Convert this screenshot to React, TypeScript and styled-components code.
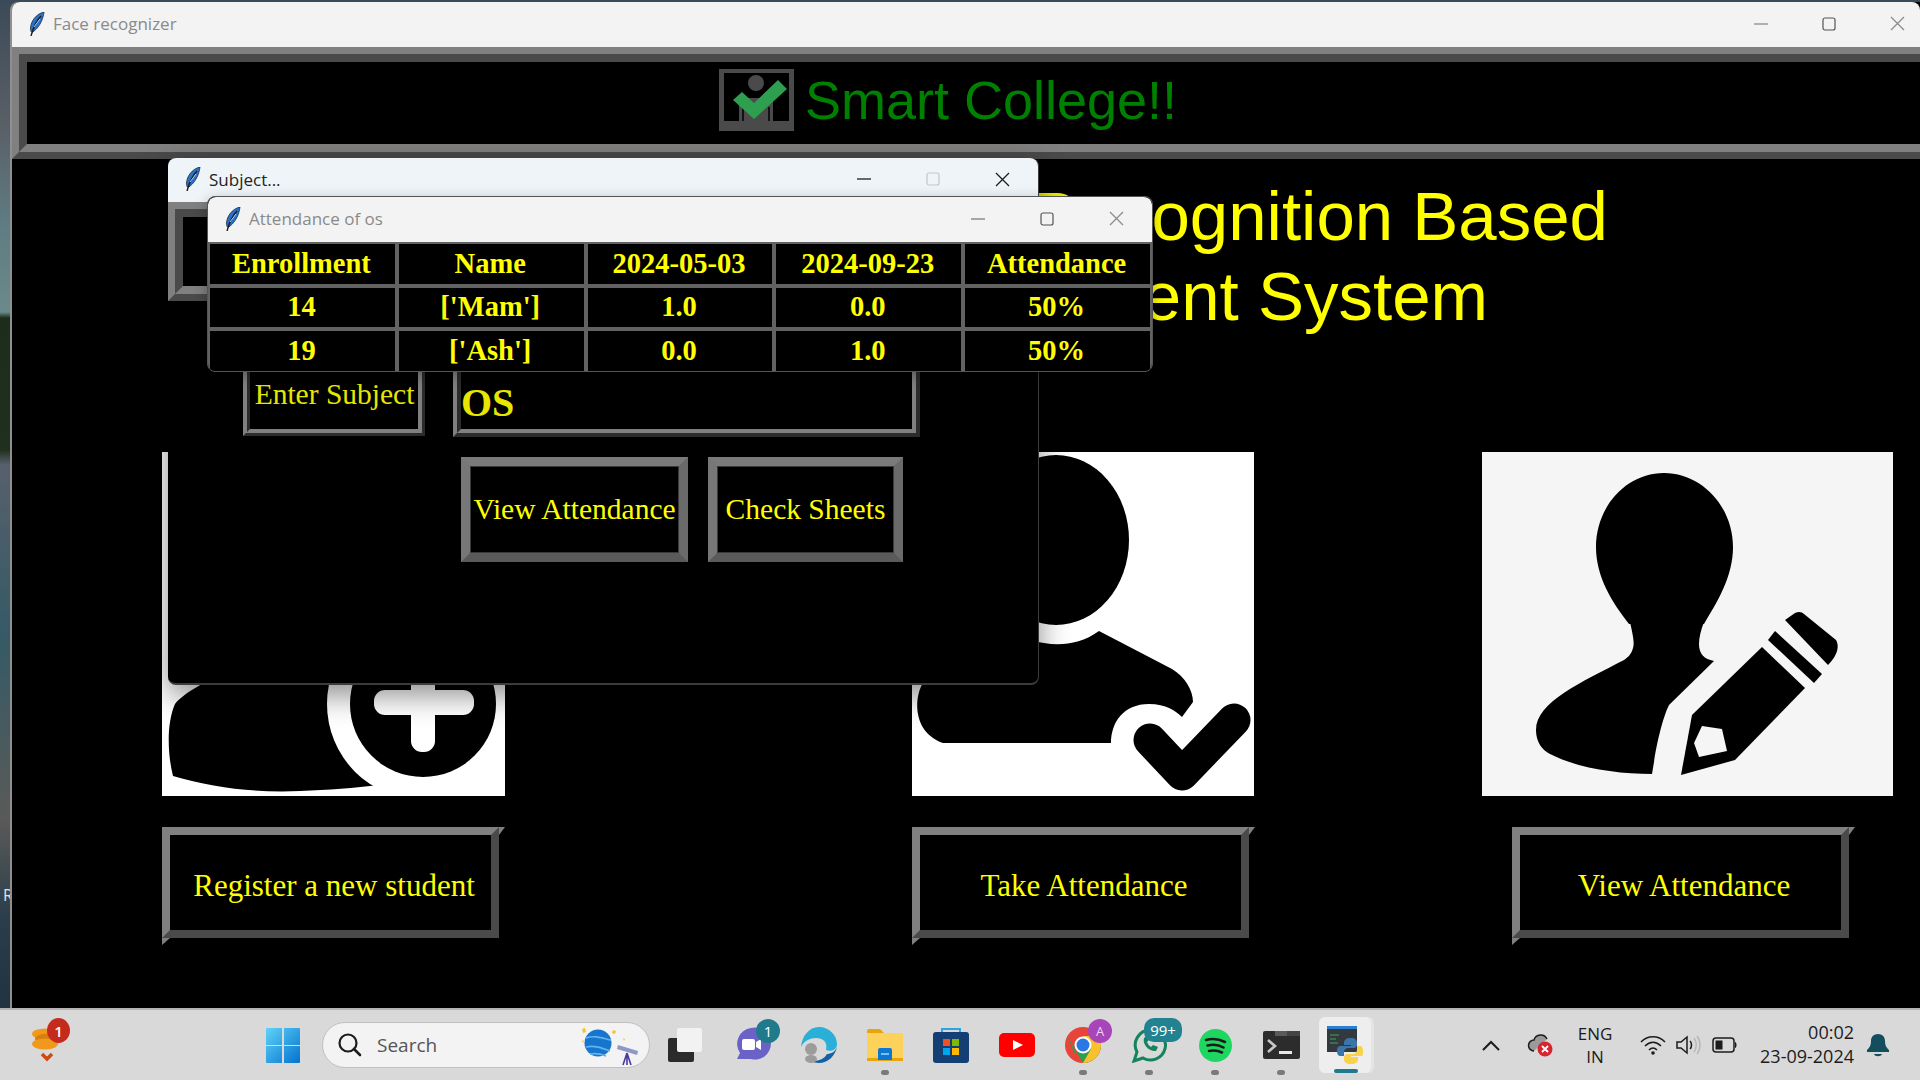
import React from 'react';
import styled, { createGlobalStyle } from 'styled-components';

const GlobalStyle = createGlobalStyle`
  html, body {
    margin: 0;
    padding: 0;
    width: 1920px;
    height: 1080px;
    overflow: hidden;
    background: #000;
    font-family: "Liberation Serif", serif;
  }
`;

const UI_FONT = `"Open Sans", "Noto Sans", sans-serif`;

function Feather() {
  return (
    <svg width="16" height="24" viewBox="0 0 16 24">
      <path d="M15 0C7 2 2 9 1.500 16c-.2 2 .3 3.500 1.500 4.500C9 17 14 9 15 0z" fill="#2a72c8" stroke="#1b2a3c" strokeWidth=".8" />
      <path d="M12 4C8 8 5 13 2 24" stroke="#141c26" strokeWidth="1.400" fill="none" />
      <path d="M5 15c2-3 4-5 6-8" stroke="#a9d0f5" strokeWidth="1" fill="none" />
    </svg>
  );
}

function WindowControls({ dim, gaps, inset, disabledMax }: { dim?: boolean; gaps: number; inset: number; disabledMax?: boolean }) {
  const stroke = dim ? '#8c8c8c' : '#1c1c1c';
  return (
    <Controls $gap={gaps} $inset={inset}>
      <svg width="14" height="14" viewBox="0 0 14 14">
        <path d="M0 7h14" stroke={stroke} strokeWidth="1.3" />
      </svg>
      <svg width="14" height="14" viewBox="0 0 14 14">
        <rect x="1" y="1" width="12" height="12" rx="2" fill="none" stroke={disabledMax ? '#c6c6c6' : dim ? '#555' : stroke} strokeWidth="1.2" />
      </svg>
      <svg width="15" height="15" viewBox="0 0 15 15">
        <path d="M1 1l13 13M14 1L1 14" stroke={stroke} strokeWidth="1.3" />
      </svg>
    </Controls>
  );
}

function Logo() {
  return (
    <svg width="75" height="62" viewBox="0 0 75 62">
      <rect width="75" height="62" fill="#4a4a4a" />
      <rect x="5" y="4" width="65" height="48" fill="#000" />
      <circle cx="37" cy="14" r="8" fill="#4a4a4a" />
      <path d="M20 29h34v23H20z" fill="#4a4a4a" />
      <path d="M24 38v14M50 38v14" stroke="#000" strokeWidth="1.5" />
      <path d="M14 31l9-8 12 11 24-23 9 9-33 30z" fill="#2e9e4f" />
    </svg>
  );
}

function AddUserArt() {
  return (
    <Art viewBox="0 0 343 344">
      <rect width="343" height="344" fill="#fff" />
      <ellipse cx="150" cy="90" rx="72" ry="84" fill="#000" />
      <path d="M150 190C110 200 30 230 13 252 5 270 5 300 11 324c40 12 85 17 127 15 28-1 55-3 79-6L240 200z" fill="#000" />
      <circle cx="261" cy="252" r="96" fill="#fff" />
      <circle cx="261" cy="252" r="73" fill="#000" />
      <rect x="212" y="238" width="100" height="25" rx="11" fill="#fff" />
      <rect x="249" y="200" width="24" height="100" rx="11" fill="#fff" />
    </Art>
  );
}

function TakeAttendanceArt() {
  return (
    <Art viewBox="0 0 342 344">
      <rect width="342" height="344" fill="#fff" />
      <ellipse cx="144" cy="88" rx="73" ry="85" fill="#000" />
      <path d="M187 179c-18 13-38 15-55 12-20-3-35-6-45-8C60 200 20 205 11 231 2 245 0 280 31 291h168c0-20 12-39 38-39 17 0 27 7 33 13l11-15c0-12-8-25-21-33z" fill="#000" />
      <path d="M238 288l32 34 52-54" stroke="#000" strokeWidth="33" strokeLinecap="round" strokeLinejoin="round" fill="none" />
    </Art>
  );
}

function ViewAttendanceArt() {
  return (
    <Art viewBox="0 0 411 344">
      <rect width="411" height="344" fill="#f5f5f5" />
      <path d="M182 21C220 21 251 55 251 95 251 125 235 150 222 172L147 172C130 150 114 125 114 95 114 55 144 21 182 21z" fill="#000" />
      <path d="M147 165C150 180 153 190 151 196 149 203 146 205 142 208 100 230 54 250 54 278 54 290 60 298 68 302 95 316 135 322 170 322L172 310C175 290 181 265 187 253L232 209C222 207 217 202 217 192 217 185 219 178 222 170z" fill="#000" />
      <path d="M199 323l11-60 70-68 43 41-70 72z" fill="#000" />
      <path d="M220 274l20 3 5 22-28 6-5-14z" fill="#f5f5f5" />
      <path d="M293 179l47 43-8 9-46-43z" fill="#000" />
      <path d="M303 168l10-7c4-2 7-1 9 1l32 26c3 5 3 14-8 25z" fill="#000" />
    </Art>
  );
}

function Coins() {
  return (
    <svg width="32" height="36" viewBox="0 0 32 36">
      <ellipse cx="14" cy="7" rx="13" ry="5.500" fill="#f0991d" />
      <ellipse cx="17" cy="12" rx="13" ry="5.500" fill="#d97f10" />
      <ellipse cx="14" cy="17" rx="13" ry="5.500" fill="#f0991d" />
      <path d="M11 27l5 5 5-5" stroke="#d2490f" strokeWidth="3.500" fill="none" />
    </svg>
  );
}

function WinLogo() {
  return (
    <svg width="34" height="35" viewBox="0 0 34 35">
      <defs>
        <linearGradient id="w" x1="0" y1="0" x2="1" y2="1">
          <stop offset="0" stopColor="#5fd3f8" />
          <stop offset="1" stopColor="#0572cf" />
        </linearGradient>
      </defs>
      <path d="M0 1a1 1 0 011-1h15v17H0zM18 0h15a1 1 0 011 1v16H18zM0 18h16v17H1a1 1 0 01-1-1zM18 18h16v16a1 1 0 01-1 1H18z" fill="url(#w)" />
    </svg>
  );
}

function SearchArt() {
  return (
    <svg width="62" height="44" viewBox="0 0 62 44">
      <circle cx="18" cy="20" r="13.500" fill="#1875cd" />
      <path d="M6 15c8-3 16 0 25 2M6 24c8-2 16 1 24 4M10 31c6-1 11 0 16 2" stroke="#62b4ee" strokeWidth="1.600" fill="none" />
      <path d="M2 6l3-1 1 4-3 1zM33 7l3 1-1 3-3-1zM2 17l2 1-1 2zM43 15l2 1-1 2z" fill="#f2c52f" />
      <path d="M38 22l20 6-1 4-20-6z" fill="#8f96c8" />
      <path d="M47 30l-4 12M47 30l4 12M47 30v12" stroke="#4a3b9d" strokeWidth="1.600" />
    </svg>
  );
}

function TaskView() {
  return (
    <TaskViewBox>
      <svg width="36" height="34" viewBox="0 0 36 34">
        <rect x="1" y="10" width="26" height="24" rx="2" fill="#2b2b2b" />
        <rect x="10" y="0" width="25" height="24" rx="2" fill="#f2f2f2" />
      </svg>
    </TaskViewBox>
  );
}

const appIcons: Record<string, React.ReactNode> = {
  chat: (
    <svg width="36" height="36" viewBox="2 0 36 36">
      <path d="M18 1a16 16 0 110 31H4l3-6A16 16 0 0118 1z" fill="#6b62c8" />
      <rect x="9" y="12" width="13" height="11" rx="2" fill="#fff" />
      <path d="M23 15l5-3v11l-5-3z" fill="#fff" />
    </svg>
  ),
  edge: (
    <svg width="36" height="36" viewBox="0 0 36 36">
      <path d="M18 0c10 0 18 8 18 17 0 6-6 8-11 6 2-8-3-12-10-12C9 11 3 14 0 20 1 9 8 0 18 0z" fill="#2ab0d8" />
      <path d="M36 20c-2 9-9 16-18 16-4 0-7-1-9-3 6 2 14 0 17-6 4 0 8-2 10-7z" fill="#1160a8" />
      <circle cx="10" cy="22" r="6" fill="#9c9c9c" />
      <ellipse cx="10" cy="32" rx="6" ry="4" fill="#9c9c9c" />
    </svg>
  ),
  files: (
    <svg width="38" height="32" viewBox="0 0 38 32">
      <path d="M1 2a2 2 0 012-2h11l4 4H1z" fill="#e8a60c" />
      <rect x="1" y="4" width="36" height="28" rx="1" fill="#fdd25b" />
      <rect x="1" y="29" width="36" height="3" fill="#e8a60c" />
      <path d="M12 21a2 2 0 012-2h10a2 2 0 012 2v10H12z" fill="#0a78d4" />
      <rect x="15" y="24" width="8" height="2" fill="#7cc0f2" />
    </svg>
  ),
  store: (
    <svg width="36" height="36" viewBox="0 0 36 36">
      <path d="M9 7V2h18v5" stroke="#2ca4e0" strokeWidth="2" fill="none" />
      <rect y="5" width="36" height="31" rx="3" fill="#143f74" />
      <rect x="10" y="12" width="7" height="7" fill="#f25022" />
      <rect x="19" y="12" width="7" height="7" fill="#7fba00" />
      <rect x="10" y="21" width="7" height="7" fill="#00a4ef" />
      <rect x="19" y="21" width="7" height="7" fill="#ffb900" />
    </svg>
  ),
  youtube: (
    <svg width="36" height="24" viewBox="0 0 36 24">
      <rect width="36" height="24" rx="5" fill="#f00" />
      <path d="M14 7l10 5-10 5z" fill="#fff" />
    </svg>
  ),
  chrome: (
    <svg width="36" height="36" viewBox="0 0 36 36">
      <circle cx="18" cy="18" r="18" fill="#e8443a" />
      <path d="M2.400 9L18 36c10 0 18-8 18-18H18L10 27z" fill="#2f9e4f" />
      <path d="M18 36c10 0 18-8 18-18 0-3-1-6-2-9H18l8 13z" fill="#fbc02d" />
      <circle cx="18" cy="18" r="8.500" fill="#fff" />
      <circle cx="18" cy="18" r="6.500" fill="#2a78e4" />
    </svg>
  ),
  whatsapp: (
    <svg width="36" height="36" viewBox="0 0 36 36">
      <path d="M19 3a15 15 0 11-7 28l-9 3 3-9A15 15 0 0119 3z" fill="none" stroke="#15835c" strokeWidth="3" />
      <path d="M13 11c-2 6 5 14 12 13l2-4-5-2-2 2c-2-1-3-3-4-5l2-2-2-4z" fill="#15835c" />
    </svg>
  ),
  spotify: (
    <svg width="33" height="33" viewBox="0 0 33 33">
      <circle cx="16.500" cy="16.500" r="16.500" fill="#1ed760" />
      <path d="M7 11c7-2 13-1 19 2M8.500 16.500c6-1.500 11-1 16 2M10 22c5-1 9-.5 13 1.500" stroke="#1b1b1b" strokeWidth="2.600" strokeLinecap="round" fill="none" />
    </svg>
  ),
  terminal: (
    <svg width="37" height="28" viewBox="0 0 37 28">
      <rect width="37" height="28" rx="2" fill="#2c2c2c" />
      <rect x="12" width="12" height="5" fill="#5a5a5a" />
      <rect x="24" width="13" height="5" fill="#444" />
      <path d="M5 9l7 6-7 6" stroke="#c8c8c8" strokeWidth="2.600" fill="none" />
      <rect x="16" y="20" width="13" height="3" fill="#e8e8e8" />
    </svg>
  ),
  python: (
    <svg width="36" height="38" viewBox="0 0 36 38">
      <rect width="30" height="26" fill="#33393f" />
      <rect width="30" height="3" fill="#2f7fd0" />
      <path d="M3 9h9M3 13h6M3 17h8" stroke="#3fa858" strokeWidth="1.200" />
      <path d="M24 12c-5 0-7 2-7 5v2h7v1H14c-3 0-4 2-4 5s1 5 4 5h3v-4c0-2 2-4 4-4h6c2 0 3-2 3-3v-2c0-3-2-5-6-5z" fill="#3a76a8" />
      <path d="M24 38c5 0 7-2 7-5v-2h-7v-1h10c2 0 2-2 2-5s-1-5-3-5h-3v4c0 2-2 4-4 4h-6c-2 0-3 2-3 3v2c0 3 2 5 7 5z" fill="#f7d24a" />
    </svg>
  ),
};

const apps = [
  { key: 'chat', badge: '1' },
  { key: 'edge' },
  { key: 'files', running: true },
  { key: 'store' },
  { key: 'youtube' },
  { key: 'chrome', avatar: 'A', running: true },
  { key: 'whatsapp', wide: '99+', running: true },
  { key: 'spotify', running: true },
  { key: 'terminal', running: true },
];

const tableRows = [
  ['Enrollment', 'Name', '2024-05-03', '2024-09-23', 'Attendance'],
  ['14', "['Mam']", '1.0', '0.0', '50%'],
  ['19', "['Ash']", '0.0', '1.0', '50%'],
];

const cards = [
  { label: 'Register a new student', art: <AddUserArt />, width: 343, offset: 150, shift: 0 },
  { label: 'Take Attendance', art: <TakeAttendanceArt />, width: 342, offset: 407, shift: 0 },
  { label: 'View Attendance', art: <ViewAttendanceArt />, width: 411, offset: 228, shift: 30 },
];

export default function App() {
  return (
    <>
      <GlobalStyle />
      <Page>
        <Desktop>
          <DesktopLabel>R</DesktopLabel>
          <MainWindow>
            <TitleBar $height={45}>
              <TitleIcon><Feather /></TitleIcon>
              <TitleText $dim>Face recognizer</TitleText>
              <WindowControls dim gaps={54} inset={15} />
            </TitleBar>
            <MainRidge>
              <BrandBar>
                <Brand>
                  <Logo />
                  <BrandName>Smart College!!</BrandName>
                </Brand>
              </BrandBar>
            </MainRidge>
            <Heading>
              <HeadingLine>Face Recognition Based</HeadingLine>
              <HeadingLine $inset={120}>Attendance Management System</HeadingLine>
            </Heading>
            <CardRow>
              {cards.map((card) => (
                <Card key={card.label} $width={card.width} $offset={card.offset}>
                  <ArtBox>{card.art}</ArtBox>
                  <BevelButton $shift={card.shift}>{card.label}</BevelButton>
                </Card>
              ))}
            </CardRow>
          </MainWindow>

          <SubjectWindow>
            <TitleBar $height={44} $tint="#eef4f7">
              <TitleIcon><Feather /></TitleIcon>
              <TitleText>Subject...</TitleText>
              <WindowControls gaps={55} inset={28} disabledMax />
            </TitleBar>
            <Ridge>
              <SubjectBanner />
            </Ridge>
            <FormRow>
              <SubjectLabel>Enter Subject</SubjectLabel>
              <SubjectInput>OS</SubjectInput>
            </FormRow>
            <ActionRow>
              <ActionButton $width={227}>View Attendance</ActionButton>
              <ActionButton $width={195}>Check Sheets</ActionButton>
            </ActionRow>
          </SubjectWindow>

          <AttendanceWindow>
            <TitleBar $height={45}>
              <TitleIcon><Feather /></TitleIcon>
              <TitleText $dim>Attendance of os</TitleText>
              <WindowControls dim gaps={55} inset={28} />
            </TitleBar>
            <SheetGrid>
              {tableRows.flat().map((value, index) => (
                <SheetCell key={index}>{value}</SheetCell>
              ))}
            </SheetGrid>
          </AttendanceWindow>
        </Desktop>

        <Taskbar>
          <CoinWidget>
            <Coins />
            <CountBadge>1</CountBadge>
          </CoinWidget>
          <StartSlot><WinLogo /></StartSlot>
          <SearchPill>
            <svg width="26" height="26" viewBox="0 0 26 26">
              <circle cx="11" cy="11" r="8.500" fill="none" stroke="#1c1c1c" strokeWidth="2.200" />
              <path d="M17 17l6 6" stroke="#1c1c1c" strokeWidth="2.600" strokeLinecap="round" />
            </svg>
            <SearchText>Search</SearchText>
            <SearchArt />
          </SearchPill>
          <TaskView />
          {apps.map((app) => (
            <AppSlot key={app.key}>
              {appIcons[app.key]}
              {app.badge && <TealBadge>{app.badge}</TealBadge>}
              {app.avatar && <AvatarBadge>{app.avatar}</AvatarBadge>}
              {app.wide && <WideBadge>{app.wide}</WideBadge>}
              {app.running && <RunDot />}
            </AppSlot>
          ))}
          <ActiveSlot>
            {appIcons.python}
            <ActiveBar />
          </ActiveSlot>
          <Tray>
            <svg width="20" height="12" viewBox="0 0 20 12">
              <path d="M2 11l8-8 8 8" stroke="#1c1c1c" strokeWidth="2" fill="none" />
            </svg>
            <CloudBox>
              <svg width="26" height="24" viewBox="0 0 26 24">
                <path d="M7 18a5.500 5.500 0 010-11 7 7 0 0113-1" fill="#9a9a9a" stroke="#1c1c1c" strokeWidth="1.500" />
                <circle cx="18" cy="16" r="7.500" fill="#d9232e" />
                <path d="M15 13l6 6M21 13l-6 6" stroke="#fff" strokeWidth="1.800" />
              </svg>
            </CloudBox>
            <LangBlock>
              <span>ENG</span>
              <span>IN</span>
            </LangBlock>
            <svg width="26" height="20" viewBox="0 0 26 20">
              <path d="M1 7c7-7 17-7 24 0M5 11c5-5 11-5 16 0M9 15c2.500-2.500 5.500-2.500 8 0" stroke="#1c1c1c" strokeWidth="1.600" fill="none" />
              <circle cx="13" cy="18" r="1.800" fill="#1c1c1c" />
            </svg>
            <svg width="26" height="20" viewBox="0 0 26 20">
              <path d="M1 7h4l6-5v16l-6-5H1z" fill="none" stroke="#1c1c1c" strokeWidth="1.500" />
              <path d="M14 6c2 2 2 6 0 8" stroke="#1c1c1c" strokeWidth="1.500" fill="none" />
              <path d="M18 3c3 4 3 10 0 14M21 1c4 5 4 13 0 18" stroke="#b5b5b5" strokeWidth="1.300" fill="none" />
            </svg>
            <svg width="26" height="16" viewBox="0 0 26 16">
              <rect x="1" y="1" width="21" height="14" rx="3" fill="none" stroke="#1c1c1c" strokeWidth="1.500" />
              <rect x="3.500" y="3.500" width="7" height="9" fill="#1c1c1c" />
              <path d="M23 5c2 0 2 6 0 6z" fill="#1c1c1c" />
            </svg>
            <ClockBlock>
              <span>00:02</span>
              <span>23-09-2024</span>
            </ClockBlock>
            <svg width="22" height="24" viewBox="0 0 22 24">
              <path d="M11 1c-4.500 0-7 3-7 7 0 5-2 7-4 9v2h22v-2c-2-2-4-4-4-9 0-4-2.500-7-7-7z" fill="#134e5e" />
              <path d="M7 21h8c-1 3-7 3-8 0z" fill="#134e5e" />
            </svg>
          </Tray>
        </Taskbar>
      </Page>
    </>
  );
}

const Page = styled.div`
  display: flex;
  flex-direction: column;
  width: 1920px;
  height: 1080px;
  overflow: hidden;
`;

const Desktop = styled.div`
  position: relative;
  flex: 1;
  background: linear-gradient(180deg, #3b4a58 0, #5a5f66 125px, #5f7c82 225px, #6a8a8a 312px, #1c2d1c 318px, #20301f 450px, #56606c 465px, #355a66 635px, #5a5a58 820px, #2a3d4a 920px, #1f3340 100%);
`;

const DesktopLabel = styled.span`
  position: absolute;
  left: 3px;
  top: 884px;
  color: #d8e4f0;
  font: 16px ${UI_FONT};
`;

const MainWindow = styled.div`
  position: absolute;
  left: 12px;
  top: 2px;
  right: 0;
  bottom: 0;
  background: #000;
  border-radius: 8px 0 0 0;
  box-shadow: -2px 0 0 #8f8f8f;
`;

const TitleBar = styled.div<{ $height: number; $tint?: string }>`
  display: flex;
  align-items: center;
  box-sizing: border-box;
  height: ${(p) => p.$height}px;
  padding: 0 0 2px 17px;
  background: ${(p) => p.$tint ?? '#f3f3f3'};
  border-radius: 8px 8px 0 0;
`;

const TitleIcon = styled.span`
  display: flex;
  width: 24px;
`;

const TitleText = styled.span<{ $dim?: boolean }>`
  flex: 1;
  font: 17px ${UI_FONT};
  color: ${(p) => (p.$dim ? '#8a8a8a' : '#222')};
`;

const Controls = styled.div<{ $gap: number; $inset: number }>`
  display: flex;
  align-items: center;
  gap: ${(p) => p.$gap}px;
  padding-right: ${(p) => p.$inset}px;
`;

const Ridge = styled.div`
  border: 7px solid;
  border-color: #808080 #4a4a4a #4a4a4a #808080;
`;

const MainRidge = styled(Ridge)`
  margin-right: -16px;
  overflow: hidden;
`;

const BrandBar = styled.div`
  display: flex;
  justify-content: center;
  height: 82px;
  padding-right: 52px;
  border: 8px solid;
  border-color: #4a4a4a #808080 #808080 #4a4a4a;
  background: #000;
`;

const SubjectBanner = styled(BrandBar)`
  height: 69px;
  padding-right: 0;
`;

const Brand = styled.div`
  display: flex;
  align-items: center;
  gap: 11px;
  height: 76px;
`;

const BrandName = styled.span`
  font: 54px "Liberation Sans", sans-serif;
  color: #008000;
  line-height: 62px;
`;

const Heading = styled.div`
  display: flex;
  flex-direction: column;
  align-items: flex-end;
  width: 1908px;
  box-sizing: border-box;
  height: 160px;
  margin-top: 18px;
  padding-right: 312px;
`;

const HeadingLine = styled.div<{ $inset?: number }>`
  font: 69px/80px "Liberation Sans", sans-serif;
  color: #ff0;
  white-space: nowrap;
  margin-right: ${(p) => p.$inset ?? 0}px;
`;

const CardRow = styled.div`
  display: flex;
  margin-top: 115px;
`;

const Card = styled.div<{ $width: number; $offset: number }>`
  display: flex;
  flex-direction: column;
  width: ${(p) => p.$width}px;
  margin-left: ${(p) => p.$offset}px;
`;

const ArtBox = styled.div`
  height: 344px;
`;

const Art = styled.svg`
  display: block;
  width: 100%;
  height: 100%;
`;

const BevelButton = styled.div<{ $shift: number }>`
  position: relative;
  box-sizing: border-box;
  display: flex;
  align-items: center;
  justify-content: center;
  width: 337px;
  height: 111px;
  margin-top: 31px;
  margin-left: ${(p) => p.$shift}px;
  padding: 7px 0 0 7px;
  border: 8px solid;
  border-color: #808080 #4a4a4a #4a4a4a #808080;
  background: #000;
  color: #ff0;
  font-size: 31px;

  &::before {
    content: '';
    position: absolute;
    top: -8px;
    right: -14px;
    width: 6px;
    height: 8px;
    background: #808080;
    clip-path: polygon(0 0, 100% 0, 0 100%);
  }

  &::after {
    content: '';
    position: absolute;
    left: -8px;
    bottom: -15px;
    width: 8px;
    height: 7px;
    background: #808080;
    clip-path: polygon(0 0, 100% 0, 0 100%);
  }
`;

const SubjectWindow = styled.div`
  position: absolute;
  left: 168px;
  top: 158px;
  width: 871px;
  height: 527px;
  box-sizing: border-box;
  background: #000;
  border-right: 1px solid #3c3c3c;
  border-bottom: 2px solid #3c3c3c;
  border-radius: 8px;
  box-shadow: 0 10px 30px rgba(0, 0, 0, 0.45);
`;

const FormRow = styled.div`
  display: flex;
  align-items: flex-start;
  gap: 28px;
  margin-top: 51px;
  padding-left: 75px;
`;

const SubjectLabel = styled.div`
  box-sizing: border-box;
  display: flex;
  align-items: center;
  justify-content: center;
  width: 182px;
  height: 84px;
  padding-left: 1px;
  border: 7px ridge #808080;
  color: #e6e600;
  font-size: 29.500px;
`;

const SubjectInput = styled.div`
  box-sizing: border-box;
  display: flex;
  align-items: center;
  width: 467px;
  height: 85px;
  padding-top: 16px;
  border: 8px ridge #808080;
  color: #e6e600;
  font-size: 40px;
  font-weight: bold;
`;

const ActionRow = styled.div`
  display: flex;
  gap: 20px;
  margin-top: 20px;
  padding-left: 293px;
`;

const ActionButton = styled.div<{ $width: number }>`
  box-sizing: border-box;
  display: flex;
  align-items: center;
  justify-content: center;
  width: ${(p) => p.$width}px;
  height: 105px;
  border: 9px solid;
  border-color: #7a7a7a #6a6a6a #5a5a5a #777777;
  outline: 1px solid #3a3a3a;
  outline-offset: -10px;
  color: #ff0;
  font-size: 29.500px;
  white-space: nowrap;
`;

const AttendanceWindow = styled.div`
  position: absolute;
  left: 207px;
  top: 196px;
  width: 946px;
  height: 176px;
  box-sizing: border-box;
  background: #000;
  border: 1px solid #555;
  border-radius: 8px;
  overflow: hidden;
  box-shadow: 0 4px 14px rgba(0, 0, 0, 0.3);
`;

const SheetGrid = styled.div`
  display: grid;
  grid-template-columns: repeat(5, 188.800px);
  grid-auto-rows: 43.500px;
`;

const SheetCell = styled.div`
  box-sizing: border-box;
  display: flex;
  align-items: center;
  justify-content: center;
  padding-right: 2px;
  border: 2px solid #626262;
  color: #ff0;
  font-size: 28.500px;
  font-weight: bold;
`;

const Taskbar = styled.div`
  position: relative;
  display: flex;
  align-items: center;
  flex: none;
  box-sizing: border-box;
  height: 72px;
  border-top: 2px solid #b4b4b4;
  background: #d9d9d9;
  font-family: ${UI_FONT};
`;

const CoinWidget = styled.div`
  position: relative;
  display: flex;
  width: 250px;
  padding-left: 31px;
  box-sizing: border-box;
`;

const CountBadge = styled.span`
  position: absolute;
  left: 47px;
  top: -9px;
  display: flex;
  align-items: center;
  justify-content: center;
  width: 23px;
  height: 25px;
  border-radius: 50%;
  background: #c42b1c;
  color: #fff;
  font-size: 15px;
  font-weight: 600;
`;

const StartSlot = styled.div`
  display: flex;
  justify-content: center;
  width: 66px;
`;

const SearchPill = styled.div`
  display: flex;
  align-items: center;
  box-sizing: border-box;
  width: 328px;
  height: 46px;
  margin-left: 6px;
  padding: 0 7px 0 14px;
  border: 1px solid #c0c0c0;
  border-radius: 23px;
  background: #f3f3f3;
`;

const SearchText = styled.span`
  flex: 1;
  margin-left: 14px;
  font-size: 19px;
  color: #555;
`;

const TaskViewBox = styled.div`
  display: flex;
  justify-content: center;
  width: 66px;
  margin-left: 2px;
  margin-right: 2px;
`;

const AppSlot = styled.div`
  position: relative;
  display: flex;
  align-items: center;
  justify-content: center;
  width: 66px;
  height: 70px;
`;

const TealBadge = styled.span`
  position: absolute;
  left: 36px;
  top: 9px;
  display: flex;
  align-items: center;
  justify-content: center;
  width: 24px;
  height: 24px;
  border-radius: 50%;
  background: #1f7a8c;
  color: #fff;
  font-size: 15px;
`;

const AvatarBadge = styled(TealBadge)`
  left: 38px;
  background: #a845b8;
  font-size: 13px;
  color: #ecd5f0;
`;

const WideBadge = styled(TealBadge)`
  left: 28px;
  top: 8px;
  width: 38px;
  height: 24px;
  border-radius: 10px;
  background: #23828f;
  font-size: 15px;
`;

const RunDot = styled.span`
  position: absolute;
  bottom: 5px;
  left: 29px;
  width: 8px;
  height: 5px;
  border-radius: 3px;
  background: #7a7a7a;
`;

const ActiveSlot = styled(AppSlot)`
  box-sizing: border-box;
  width: 52px;
  height: 56px;
  margin-left: 5px;
  border-radius: 6px;
  background: #eeeeee;
  box-shadow: 3px 0 0 #e4e4e4;
`;

const ActiveBar = styled.span`
  position: absolute;
  bottom: 0;
  left: 15px;
  width: 24px;
  height: 4px;
  border-radius: 2px;
  background: #1f7a8c;
`;

const Tray = styled.div`
  display: flex;
  align-items: center;
  flex: 1;
  padding-left: 110px;
  gap: 10px;
  color: #1c1c1c;
`;

const CloudBox = styled.div`
  display: flex;
  margin-left: 16px;
`;

const LangBlock = styled.div`
  display: flex;
  flex-direction: column;
  align-items: center;
  width: 60px;
  margin-left: 2px;
  margin-right: 5px;
  font-size: 17px;
  line-height: 23px;
`;

const ClockBlock = styled.div`
  display: flex;
  flex-direction: column;
  align-items: flex-end;
  width: 106px;
  margin-right: 3px;
  margin-top: -2px;
  font-size: 18px;
  line-height: 24px;
`;
